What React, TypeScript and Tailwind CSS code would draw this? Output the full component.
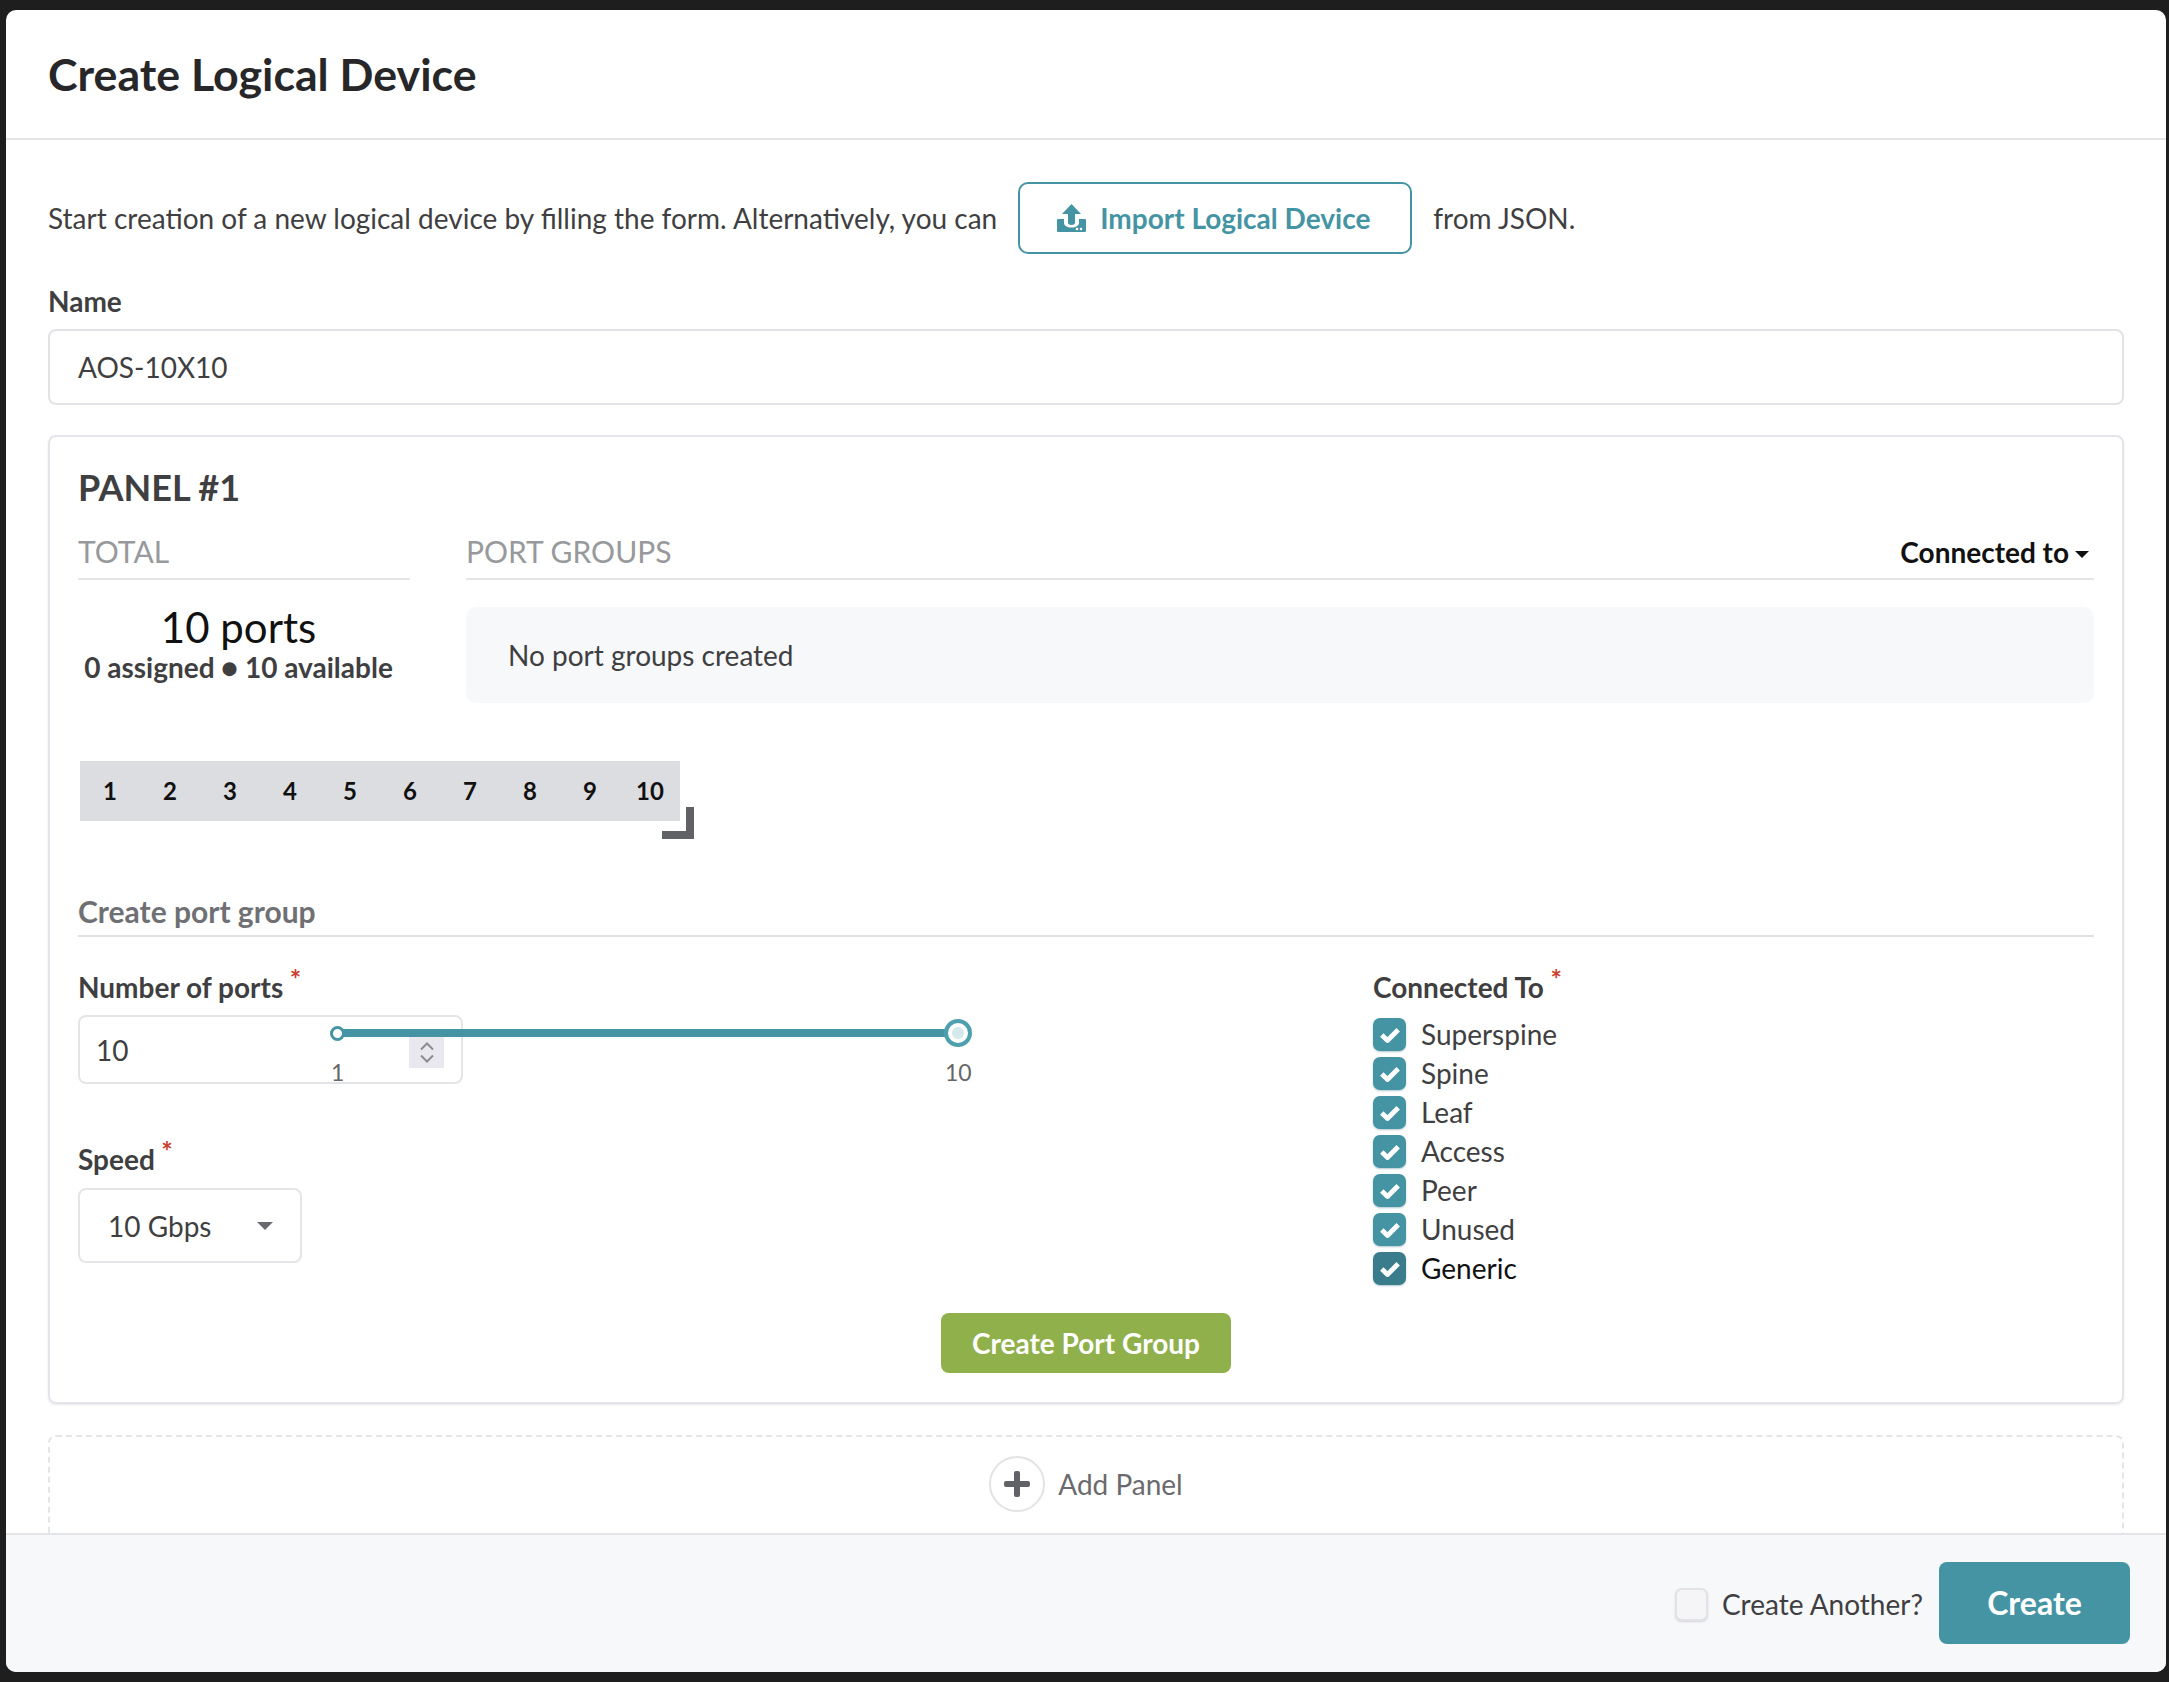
import React from "react";

const connectedTo = ["Superspine", "Spine", "Leaf", "Access", "Peer", "Unused", "Generic"];
const ports = [1, 2, 3, 4, 5, 6, 7, 8, 9, 10];

const Check = () => (
  <svg width="20" height="16" viewBox="0 0 20 16" fill="none">
    <path d="M1.800 8l5.700 5.500L18.200 2.800" stroke="#fff" strokeWidth="4.800" strokeLinejoin="round" />
  </svg>
);

const Star = () => (
  <span className="absolute -top-[5px] -right-[18px] text-[27px] leading-[28px] font-bold text-[#c8402f]">*</span>
);

const App: React.FC = () => {
  return (
    <div className="h-[1682px] w-[2169px] bg-[#1e1e1e] pt-[10px] pb-[10px] pl-[6px] pr-[3px] font-['Lato',sans-serif] text-[#3f3f42]">
      <div className="flex h-full flex-col overflow-hidden rounded-[10px] bg-white">
        {/* Header */}
        <div className="flex h-[130px] shrink-0 items-center border-b-2 border-[#e3e5e8] pt-[2px] pl-[42px]">
          <h1 className="text-[44.700px] font-bold text-[#27272a]">Create Logical Device</h1>
        </div>

        {/* Body */}
        <div className="flex-1 overflow-hidden px-[42px]">
          <div className="mt-[42px] flex h-[72px] items-center text-[28px]">
            <span>Start creation of a new logical device by filling the form. Alternatively, you can</span>
            <button className="ml-[21px] mr-[21px] flex h-[72px] w-[394px] items-center justify-start gap-[14px] rounded-[10px] border-2 border-[#4594a4] pl-[37px] font-bold text-[#4594a4]">
              <svg width="29" height="28" viewBox="0 0 29 28" fill="#4594a4">
                <path d="M14.500 0L24 10h-6v8.500c0 1.500-1 2.500-3.500 2.500s-3.500-1-3.500-2.500V10H5z" />
                <path d="M1 15h6v4c0 2.500 3 4.500 7.500 4.500S22 21.500 22 19v-4h6a1 1 0 0 1 1 1v11a1 1 0 0 1-1 1H1a1 1 0 0 1-1-1V16a1 1 0 0 1 1-1z" />
                <circle cx="20" cy="25" r="1.300" fill="#fff" />
                <circle cx="24" cy="25" r="1.300" fill="#fff" />
              </svg>
              Import Logical Device
            </button>
            <span>from JSON.</span>
          </div>

          <div className="mt-[30px] text-[28px] leading-[34px] font-bold">Name</div>
          <div className="mt-[11px] flex h-[76px] items-center rounded-[8px] border-2 border-[#e1e3e6] pl-[28px] text-[28px]">
            AOS-10X10
          </div>

          {/* Panel */}
          <div className="mt-[30px] h-[969px] rounded-[8px] border-2 border-[#e3e5ea] px-[28px] shadow-[0_1px_2px_rgba(60,60,90,0.12)]">
            <h2 className="mt-[28px] text-[36px] leading-[44px] font-bold text-[#3f3f42]">PANEL #1</h2>

            <div className="mt-[24px] flex gap-[56px]">
              <div className="w-[332px] shrink-0">
                <div className="h-[47px] border-b-2 border-[#e3e5e8] text-[30px] leading-[36px] text-[#97999c]">TOTAL</div>
                <div className="mt-[22px] pr-[11px] text-center text-[42px] leading-[50px] text-[#111]">10 ports</div>
                <div className="-mt-px pr-[11px] text-center text-[28px] leading-[32px] font-bold whitespace-nowrap">0 assigned ● 10 available</div>
              </div>
              <div className="flex-1">
                <div className="flex h-[47px] items-start justify-between border-b-2 border-[#e3e5e8] pr-[5px]">
                  <span className="text-[30px] leading-[36px] text-[#97999c]">PORT GROUPS</span>
                  <span className="mt-px flex items-center gap-[6px] text-[28px] leading-[36px] font-bold text-[#111]">
                    Connected to
                    <span className="mt-[4px] h-0 w-0 border-x-[7px] border-t-[7px] border-x-transparent border-t-[#111]" />
                  </span>
                </div>
                <div className="mt-[27px] flex h-[96px] items-center rounded-[10px] bg-[#f7f8fa] pl-[42px] text-[28px]">
                  No port groups created
                </div>
              </div>
            </div>

            {/* Port strip */}
            <div className="relative mt-[58px] ml-[2px] flex h-[60px] w-[600px] bg-[#dcdde0]">
              {ports.map((p) => (
                <div key={p} className="flex w-[60px] items-center justify-center text-[24px] font-bold text-[#111]">
                  {p}
                </div>
              ))}
              <div className="absolute top-[46px] -right-[14px] h-[32px] w-[32px] border-r-[8px] border-b-[8px] border-[#616266]" />
            </div>

            <div className="mt-[72px] h-[44px] border-b-2 border-[#dfe1e4] text-[30px] leading-[36px] font-bold text-[#6f7073]">
              Create port group
            </div>

            <div className="mt-[33px] flex">
              <div className="relative w-[1295px] shrink-0">
                <div className="text-[28px] leading-[34px] font-bold">
                  <span className="relative">
                    Number of ports
                    <Star />
                  </span>
                </div>
                <div className="mt-[11px] flex h-[69px] w-[385px] items-center rounded-[8px] border-2 border-[#e3e5e8] pl-[16px] text-[28px]">
                  10
                  <div className="absolute top-[67px] left-[331px] flex h-[31px] w-[35px] flex-col items-center justify-center gap-[3px] bg-[#e8e8ee]">
                    <svg width="16" height="9" viewBox="0 0 16 9" fill="none">
                      <path d="M2 7.500l6-6 6 6" stroke="#8b8b92" strokeWidth="2" />
                    </svg>
                    <svg width="16" height="9" viewBox="0 0 16 9" fill="none">
                      <path d="M2 1.500l6 6 6-6" stroke="#8b8b92" strokeWidth="2" />
                    </svg>
                  </div>
                </div>

                {/* Slider */}
                <div className="absolute top-[59px] left-[259px] h-[8px] w-[621px] bg-[#4594a4]" />
                <div className="absolute top-[56px] left-[252px] h-[15px] w-[15px] rounded-full border-[3px] border-[#4594a4] bg-white" />
                <div className="absolute top-[49px] left-[866px] flex h-[28px] w-[28px] items-center justify-center rounded-full border-[4px] border-[#4fa0ae] bg-white">
                  <div className="h-[12px] w-[12px] rounded-full bg-[#d5e8ec]" />
                </div>
                <span className="absolute top-[87px] left-[253px] text-[23px] leading-[30px] text-[#666]">1</span>
                <span className="absolute top-[87px] left-[867px] text-[23px] leading-[30px] text-[#666]">10</span>

                <div className="mt-[58px] text-[28px] leading-[34px] font-bold">
                  <span className="relative">
                    Speed
                    <Star />
                  </span>
                </div>
                <div className="mt-[12px] flex h-[75px] w-[224px] items-center justify-between rounded-[8px] border-2 border-[#e3e5e8] pr-[27px] pl-[28px] text-[28px]">
                  10 Gbps
                  <span className="h-0 w-0 border-x-[8px] border-t-[8px] border-x-transparent border-t-[#6a6a6e]" />
                </div>
              </div>

              <div>
                <div className="text-[28px] leading-[34px] font-bold">
                  <span className="relative">
                    Connected To
                    <Star />
                  </span>
                </div>
                <div className="mt-[14px] flex flex-col gap-[6px]">
                  {connectedTo.map((name) => (
                    <div key={name} className="flex h-[33px] items-center gap-[15px] text-[28px]">
                      <span
                        className={
                          name === "Generic"
                            ? "flex h-[33px] w-[33px] items-center justify-center rounded-[7px] bg-[#3b7c8c] shadow-[0_1px_2px_rgba(60,120,140,0.4)]"
                            : "flex h-[33px] w-[33px] items-center justify-center rounded-[7px] bg-[#4594a4] shadow-[0_1px_2px_rgba(60,120,140,0.4)]"
                        }
                      >
                        <Check />
                      </span>
                      <span className={name === "Generic" ? "-mt-px text-[#111]" : "-mt-px"}>{name}</span>
                    </div>
                  ))}
                </div>
              </div>
            </div>

            <div className="mt-[28px] flex justify-center">
              <button className="h-[60px] w-[290px] rounded-[8px] bg-[#8fb04b] text-[28px] font-bold text-white">
                Create Port Group
              </button>
            </div>
          </div>

          {/* Add panel */}
          <div className="mt-[31px] flex h-[120px] items-start justify-center rounded-[8px] border-2 border-dashed border-[#e3e5e8] pt-[19px]">
            <div className="flex items-center gap-[13px] text-[28px] text-[#6a6a6e]">
              <span className="flex h-[56px] w-[56px] items-center justify-center rounded-full border-2 border-[#e3e3e5]">
                <svg width="26" height="26" viewBox="0 0 26 26" fill="#616266">
                  <path d="M10 2a2 2 0 0 1 2-2h2a2 2 0 0 1 2 2v8h8a2 2 0 0 1 2 2v2a2 2 0 0 1-2 2h-8v8a2 2 0 0 1-2 2h-2a2 2 0 0 1-2-2v-8H2a2 2 0 0 1-2-2v-2a2 2 0 0 1 2-2h8z" />
                </svg>
              </span>
              Add Panel
            </div>
          </div>
        </div>

        {/* Footer */}
        <div className="flex h-[139px] shrink-0 items-start justify-end border-t-2 border-[#e3e5e8] bg-[#f7f8fa] pt-[27px] pr-[36px]">
          <div className="flex h-[84px] items-center gap-[14px] text-[28px]">
            <span className="h-[33px] w-[33px] rounded-[7px] border-2 border-[#e3e3e6] bg-[#f5f5f7] shadow-[0_1px_2px_rgba(60,60,90,0.2)]" />
            Create Another?
          </div>
          <button className="ml-[16px] h-[82px] w-[191px] rounded-[8px] bg-[#4594a4] text-[32px] font-bold text-white">
            Create
          </button>
        </div>
      </div>
    </div>
  );
};

export default App;
